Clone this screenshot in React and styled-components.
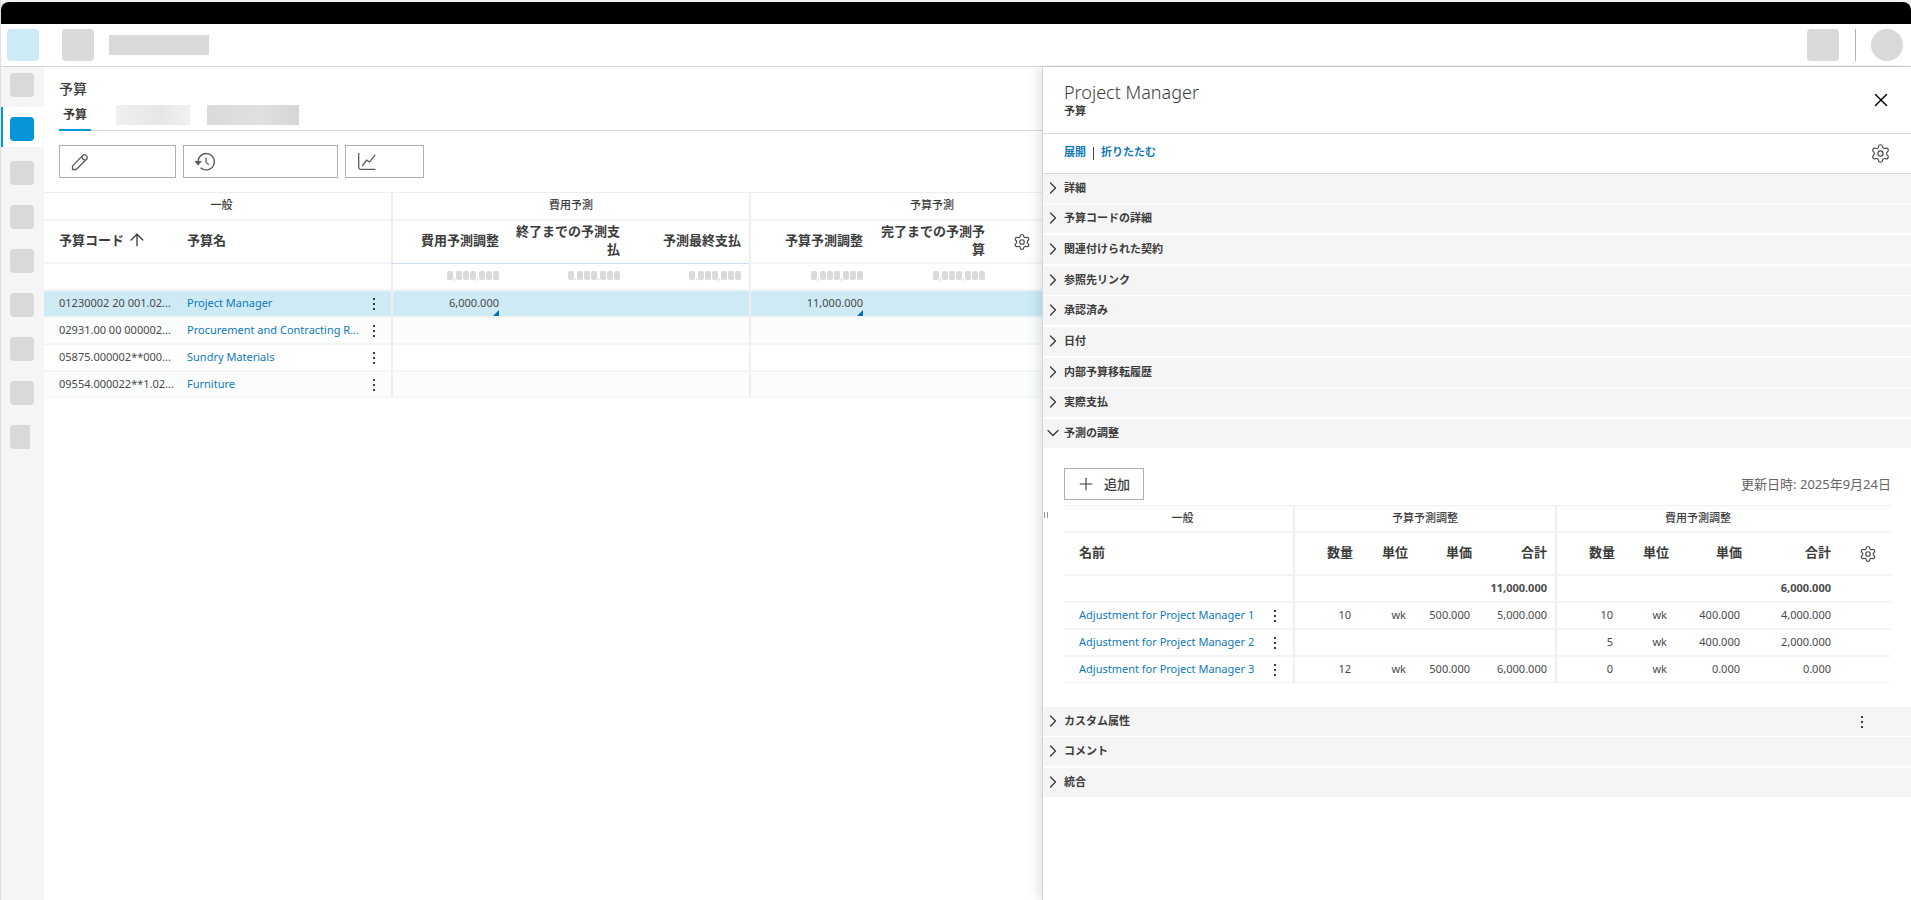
import React, { useState } from 'react'
import styled, { createGlobalStyle } from 'styled-components';
import { ArrowUp, ChevronDown, ChevronRight, Plus, Settings, X } from 'lucide-react'

const budgets = [
    { code: '01230002 20 001.02...', name: 'Project Manager', cost: '6,000.000', budget: '11,000.000' },
    { code: '02931.00 00 000002...', name: 'Procurement and Contracting R...' },
    { code: '05875.000002**000...', name: 'Sundry Materials' },
    { code: '09554.000022**1.02...', name: 'Furniture' },
]

const adjustments = [
    { name: 'Adjustment for Project Manager 1', budget: ['10', 'wk', '500.000', '5,000.000'], cost: ['10', 'wk', '400.000', '4,000.000'] },
    { name: 'Adjustment for Project Manager 2', budget: ['', '', '', ''], cost: ['5', 'wk', '400.000', '2,000.000'] },
    { name: 'Adjustment for Project Manager 3', budget: ['12', 'wk', '500.000', '6,000.000'], cost: ['0', 'wk', '0.000', '0.000'] },
]

const topSections = ['詳細', '予算コードの詳細', '関連付けられた契約', '参照先リンク', '承認済み', '日付', '内部予算移転履歴', '実際支払', '予測の調整']
const bottomSections = ['カスタム属性', 'コメント', '統合']
const navItems = [0, 1, 2, 3, 4, 5, 6, 7, 8]
const unitHeads = ['数量', '単位', '単価', '合計']

function PencilIcon() {
    return <Icon width="18" height="18" viewBox="0 0 18 18">
        <path d="M1.5 16.5v-3.6L12 2.2a1.8 1.8 0 0 1 2.6 0l1.2 1.2a1.8 1.8 0 0 1 0 2.6L5.2 16.5z" />
        <path d="M10.8 3.4q.4 3.4 3.8 3.8" />
    </Icon>
}

function HistoryIcon() {
    return <Icon width="22" height="20" viewBox="0 0 22 20">
        <path d="M3 9.5a8.2 8.2 0 1 1 2.6 6.2" />
        <path d="M11 5.5v4.6l2.8 2.8" />
        <path d="M.6 9.6h5l-2.5 3z" fill="#5c5c5c" />
    </Icon>
}

function ChartIcon() {
    return <Icon width="20" height="20" viewBox="0 0 20 20">
        <path d="M1.7 1v14.5a1.8 1.8 0 0 0 1.8 1.8H18.5" />
        <path d="M5.2 14l4.4-5.8 3 1.8 5.6-7.2" />
    </Icon>
}

function Kebab() {
    return <KebabButton type="button" aria-label="メニュー">
        <svg width="4" height="12" viewBox="0 0 4 12" fill="#3c3c3c">
            <rect x="1" y="0" width="2" height="2" />
            <rect x="1" y="5" width="2" height="2" />
            <rect x="1" y="10" width="2" height="2" />
        </svg>
    </KebabButton>
}

// total that is still loading: one block for every digit
function Masked({ mark }) {
    return <MaskRow>
        <i /><span>{mark}</span><i /><i /><i /><span>{mark}</span><i /><i /><i />
    </MaskRow>
}

function BudgetTable() {
    return <Table $wide>
        <colgroup>
            <col width="135" /><col width="178" /><col width="34" />
            <col width="116" /><col width="121" /><col width="121" />
            <col width="122" /><col width="122" /><col width="120" />
        </colgroup>
        <thead>
            <GroupRow $tall>
                <th colSpan="3">一般</th>
                <Th colSpan="3" $divide>費用予測</Th>
                <Th colSpan="3" $divide>予算予測</Th>
            </GroupRow>
            <HeadRow>
                <Th $left $edge><Sort>予算コード<ArrowUp size={20} strokeWidth={1.6} /></Sort></Th>
                <Th $left>予算名</Th>
                <th></th>
                <Th $divide $accent>費用予測調整</Th>
                <Th $accent>終了までの予測支払</Th>
                <Th $accent>予測最終支払</Th>
                <Th $divide>予算予測調整</Th>
                <Th>完了までの予測予算</Th>
                <GearCell><IconButton type="button" aria-label="設定"><Settings size={18} strokeWidth={1.6} /></IconButton></GearCell>
            </HeadRow>
        </thead>
        <tbody>
            <Row>
                <td colSpan="3"></td>
                <Td $divide><Masked mark="," /></Td>
                <Td><Masked mark="." /></Td>
                <Td><Masked mark="," /></Td>
                <Td $divide><Masked mark="," /></Td>
                <Td><Masked mark="," /></Td>
                <td></td>
            </Row>
            {budgets.map((b, i) => (
                <Row key={b.code} $selected={i === 0} $stripe={i % 2 === 1}>
                    <Td $left $edge>{b.code}</Td>
                    <LinkCell><a href="#">{b.name}</a></LinkCell>
                    <MenuCell><Kebab /></MenuCell>
                    <Td $divide $flag={b.cost}>{b.cost}</Td>
                    <Td></Td>
                    <Td></Td>
                    <Td $divide $flag={b.budget}>{b.budget}</Td>
                    <Td></Td>
                    <td></td>
                </Row>
            ))}
        </tbody>
    </Table>
}

function AdjustmentTable() {
    return <Table>
        <colgroup>
            <col /><col width="36" />
            <col width="68" /><col width="55" /><col width="64" /><col width="75" />
            <col width="68" /><col width="54" /><col width="73" /><col width="89" /><col width="52" />
        </colgroup>
        <thead>
            <GroupRow>
                <th colSpan="2">一般</th>
                <Th colSpan="4" $divide>予算予測調整</Th>
                <Th colSpan="4" $divide>費用予測調整</Th>
                <th></th>
            </GroupRow>
            <HeadRow>
                <Th $left $edge colSpan="2">名前</Th>
                {unitHeads.map((h, i) => <Th key={h} $divide={i === 0}>{h}</Th>)}
                {unitHeads.map((h, i) => <Th key={h} $divide={i === 0}>{h}</Th>)}
                <GearCell><IconButton type="button" aria-label="設定"><Settings size={18} strokeWidth={1.6} /></IconButton></GearCell>
            </HeadRow>
        </thead>
        <tbody>
            <Row $bold>
                <td colSpan="2"></td>
                <Td $divide></Td><td></td><td></td><Td>11,000.000</Td>
                <Td $divide></Td><td></td><td></td><Td>6,000.000</Td>
                <td></td>
            </Row>
            {adjustments.map((a) => (
                <Row key={a.name}>
                    <LinkCell $edge><a href="#">{a.name}</a></LinkCell>
                    <MenuCell><Kebab /></MenuCell>
                    {a.budget.map((v, i) => <Td key={i} $divide={i === 0} $inset={i < 3}>{v}</Td>)}
                    {a.cost.map((v, i) => <Td key={i} $divide={i === 0} $inset={i < 3}>{v}</Td>)}
                    <td></td>
                </Row>
            ))}
        </tbody>
    </Table>
}

function App() {
    const [open, setOpen] = useState('予測の調整');

    return <Frame>
        <GlobalStyle />
        <BlackBar />
        <Header>
            <Tile $size="32" $tone="#cdeaf7" />
            <Tile $size="32" $tone="#dadada" />
            <Block />
            <HeaderEnd>
                <Tile $size="32" $tone="#dadada" />
                <Separator />
                <Avatar />
            </HeaderEnd>
        </Header>
        <Workspace>
            <Sidebar>
                {navItems.map((n) => (
                    <NavItem key={n} $active={n === 1}>
                        <Tile $size="24" $tone={n === 1 ? '#0696d7' : '#d9d9d9'} $cut={n === 8} />
                    </NavItem>
                ))}
            </Sidebar>
            <Main>
                <Title>予算</Title>
                <Tabs>
                    <Tab type="button">予算</Tab>
                    <Ghost $width="74" $light />
                    <Ghost $width="92" />
                </Tabs>
                <Toolbar>
                    <ToolButton type="button" aria-label="編集" $width="117"><PencilIcon /></ToolButton>
                    <ToolButton type="button" aria-label="履歴" $width="155"><HistoryIcon /></ToolButton>
                    <ToolButton type="button" aria-label="グラフ" $width="79"><ChartIcon /></ToolButton>
                </Toolbar>
                <BudgetTable />
            </Main>
            <Panel>
                <Handle />
                <PanelHead>
                    <div>
                        <h2>Project Manager</h2>
                        <p>予算</p>
                    </div>
                    <IconButton type="button" aria-label="閉じる"><X size={22} strokeWidth={1.6} color="#000" /></IconButton>
                </PanelHead>
                <PanelBar>
                    <a href="#">展開</a>
                    <span />
                    <a href="#">折りたたむ</a>
                    <IconButton type="button" aria-label="設定"><Settings size={21} strokeWidth={1.3} /></IconButton>
                </PanelBar>
                <Sections>
                    {topSections.map((s) => (
                        <Section key={s}>
                            <button type="button" onClick={() => setOpen(open === s ? '' : s)}>
                                {open === s ? <ChevronDown size={20} strokeWidth={1.6} /> : <ChevronRight size={20} strokeWidth={1.6} />}
                                {s}
                            </button>
                        </Section>
                    ))}
                </Sections>
                <Adjustments>
                    <AdjustTop>
                        <AddButton type="button"><Plus size={20} strokeWidth={1.3} />追加</AddButton>
                        <span>更新日時: 2025年9月24日</span>
                    </AdjustTop>
                    <AdjustmentTable />
                </Adjustments>
                <Sections>
                    {bottomSections.map((s, i) => (
                        <Section key={s}>
                            <button type="button">
                                <ChevronRight size={20} strokeWidth={1.6} />
                                {s}
                            </button>
                            {i === 0 && <Kebab />}
                        </Section>
                    ))}
                </Sections>
            </Panel>
        </Workspace>
    </Frame>
}

const GlobalStyle = createGlobalStyle`
*{
    box-sizing:border-box;
}

body{
    margin:0;
    background:#f2f2f2;
    color:#3c3c3c;
    font-family:"Noto Sans", "Noto Sans CJK JP", sans-serif;
    font-size:12px;
    line-height:18px;
}

button{
    font:inherit;
    color:inherit;
    background:none;
    border:0;
    padding:0;
    cursor:pointer;
}

a{
    color:#0f79b8;
    text-decoration:none;
}

h1, h2, p, ul{
    margin:0;
    padding:0;
}
`

const Frame = styled.div`
display:flex;
flex-direction:column;
min-height:100vh;
padding-top:2px;
border-left:1px solid #e0e0e0;
`

const BlackBar = styled.div`
height:22px;
background:#000;
border-radius:8px 8px 0 0;
`

const Header = styled.header`
display:flex;
align-items:center;
height:43px;
padding:0 8px 0 6px;
background:#fff;
border-bottom:1px solid #d4d6d9;
`

const Tile = styled.div`
width:${p => p.$cut ? 20 : p.$size}px;
height:${p => p.$size}px;
background:${p => p.$tone};
border-radius:${p => p.$cut ? '4px 0 0 4px' : '4px'};

& + &{
    margin-left:23px;
}
`

const Block = styled.div`
width:100px;
height:20px;
margin-left:15px;
background:#d9d9d9;
`

const HeaderEnd = styled.div`
display:flex;
margin-left:auto;
`

const Separator = styled.div`
width:1px;
margin:0 15px 0 16px;
background:#b4b4b4;
`

const Avatar = styled.div`
width:32px;
height:32px;
background:#d9d9d9;
border-radius:50%;
`

const Workspace = styled.div`
flex:1;
display:grid;
grid-template-columns:43px minmax(0, 1fr) minmax(0, 869px);
background:#fff;
`

const Sidebar = styled.ul`
display:flex;
flex-direction:column;
gap:4px;
list-style:none;
background:#f5f5f5;
`

const NavItem = styled.li`
height:40px;
padding:10px 9px 6px;
background:${p => p.$active ? '#fff' : 'transparent'};
box-shadow:${p => p.$active ? 'inset 2px 0 #0696d7' : 'none'};

&:first-child{
    height:36px;
    padding-top:6px;
}
`

const Main = styled.main`
overflow:hidden;
padding-top:12px;
`

const Title = styled.h1`
padding-left:15px;
font-size:14px;
font-weight:500;
line-height:20px;
`

const Tabs = styled.div`
display:flex;
align-items:flex-start;
height:32px;
margin-left:15px;
padding-top:4px;
box-shadow:inset 0 -1px #d9d9d9;
`

const Tab = styled.button`
width:32px;
height:28px;
padding:0 0 2px;
font-weight:700;
border-bottom:2px solid #0696d7;
margin-right:25px;
`

const Ghost = styled.div`
width:${p => p.$width}px;
height:20px;
margin:2px 17px 0 0;
background:${p => p.$light
        ? 'linear-gradient(90deg, #f0f0ef, #e6e6e6 60%, #f0f2f1)'
        : 'linear-gradient(90deg, #dadada, #dfe0df 60%, #d6d6d6)'};
`

const Toolbar = styled.div`
display:flex;
gap:7px;
padding:14px 15px;
`

const ToolButton = styled.button`
display:flex;
align-items:center;
width:${p => p.$width}px;
height:33px;
padding-left:11px;
border:1px solid #b0b0b0;
`

const Icon = styled.svg`
fill:none;
stroke:#5c5c5c;
stroke-width:1.3;
`

const IconButton = styled.button`
display:inline-flex;
vertical-align:middle;
color:#4a4a4a;
`

const KebabButton = styled.button`
display:inline-flex;
padding:0 4px;
vertical-align:middle;
`

const Table = styled.table`
width:${p => p.$wide ? '1069px' : '100%'};
table-layout:fixed;
border-collapse:separate;
border-spacing:0;
border-top:1px solid #eee;

th, td{
    padding:0;
    border-bottom:2px solid #f4f4f4;
}
tbody tr:last-child td{
    border-bottom-width:1px;
}
`

// scoped under the row so that the paddings win over the table's own
const cell = p => `
tr > &{
    position:relative;
    padding-left:${p.$edge ? 15 : p.$left ? 8 : 4}px;
    padding-right:${p.$left ? 0 : p.$inset ? 10 : 8}px;
    padding-bottom:2px;
    text-align:${p.$left ? 'left' : 'right'};
    ${p.$divide ? 'border-left:2px solid #eee;' : ''}
    ${p.$accent ? 'border-bottom:1px solid #cbdcf0;' : ''}
}
`

const Th = styled.th`
${cell}

tr > &{
    padding-bottom:4px;
}
`

const Td = styled.td`
${cell}
white-space:nowrap;

${p => p.$flag && `
&::after{
    content:'';
    position:absolute;
    right:8px;
    bottom:0;
    border-left:6px solid transparent;
    border-bottom:6px solid #0070b8;
}`}
`

const LinkCell = styled.td`
white-space:nowrap;

tr > &{
    padding-left:${p => p.$edge ? 15 : 8}px;
    padding-bottom:1px;
}
`

const MenuCell = styled.td`
text-align:center;

tr > &{
    padding-bottom:2px;
}
`

const GearCell = styled.th`
text-align:left;

tr > &{
    padding-left:20px;
}
`

const GroupRow = styled.tr`
height:${p => p.$tall ? 28 : 27}px;

&& > th{
    padding:0 0 2px;
    font-size:11px;
    font-weight:500;
    text-align:center;
}
&& > th:first-child{
    padding-left:8px;
}
`

const HeadRow = styled.tr`
height:43px;
font-size:13px;
`

const Row = styled.tr`
height:27px;
color:#4a4a4a;
font-size:11px;
font-weight:${p => p.$bold ? 700 : 400};
background:${p => p.$selected ? '#cdeaf5' : p.$stripe ? '#fbfdfc' : '#fff'};

&:last-child{
    height:26px;
}
`

const Sort = styled.span`
display:flex;
align-items:center;
gap:3px;
white-space:nowrap;
`

const MaskRow = styled.div`
display:flex;
justify-content:flex-end;
align-items:center;
gap:1px;
color:#cfcfcf;

i{
    width:6px;
    height:9px;
    background:#dadada;
    border-radius:2px;
}
span{
    width:1px;
    font-size:10px;
    text-indent:-1px;
}
`

const Panel = styled.aside`
position:relative;
background:#fff;
border-left:1px solid #cfd6dd;
box-shadow:-2px 0 12px rgba(50, 80, 120, 0.2);
clip-path:inset(-2px 0 0 -16px);
`

const Handle = styled.div`
position:absolute;
left:1px;
top:445px;
width:4px;
height:6px;
border:solid #999;
border-width:0 1px;
`

const PanelHead = styled.div`
display:flex;
justify-content:space-between;
align-items:center;
height:67px;
padding:0 19px 0 21px;
border-bottom:1px solid #d9d9d9;

h2{
    font-size:18px;
    font-weight:300;
    line-height:22px;
}
p{
    font-size:11px;
    font-weight:700;
    line-height:16px;
}
`

const PanelBar = styled.div`
display:flex;
align-items:center;
height:40px;
padding:0 20px 0 21px;
border-bottom:1px solid #d9d9d9;
font-size:11px;
font-weight:700;

a{
    padding-bottom:4px;
}
span{
    width:1px;
    height:13px;
    margin:0 7px;
    background:#4a4a4a;
}
button{
    margin-left:auto;
}
`

const Sections = styled.div`
display:flex;
flex-direction:column;
`

const Section = styled.div`
display:flex;
align-items:center;
height:29px;
margin-bottom:2px;
padding-right:43px;
background:#f5f5f5;
font-size:11px;
font-weight:700;

&:nth-child(3n + 1){
    margin-bottom:1px;
}
&:last-child{
    margin-bottom:0;
}

> button:first-child{
    flex:1;
    display:flex;
    align-items:center;
    gap:1px;
    padding-bottom:1px;
    text-align:left;
}
`

const Adjustments = styled.div`
padding:20px 20px 24px 21px;
`

const AdjustTop = styled.div`
display:flex;
justify-content:space-between;
align-items:center;
margin-bottom:5px;
color:#666;
font-size:13px;
`

const AddButton = styled.button`
display:flex;
align-items:center;
gap:8px;
width:80px;
height:32px;
padding-left:11px;
border:1px solid #b0b0b0;
color:#3c3c3c;
font-weight:500;
`

export default App
